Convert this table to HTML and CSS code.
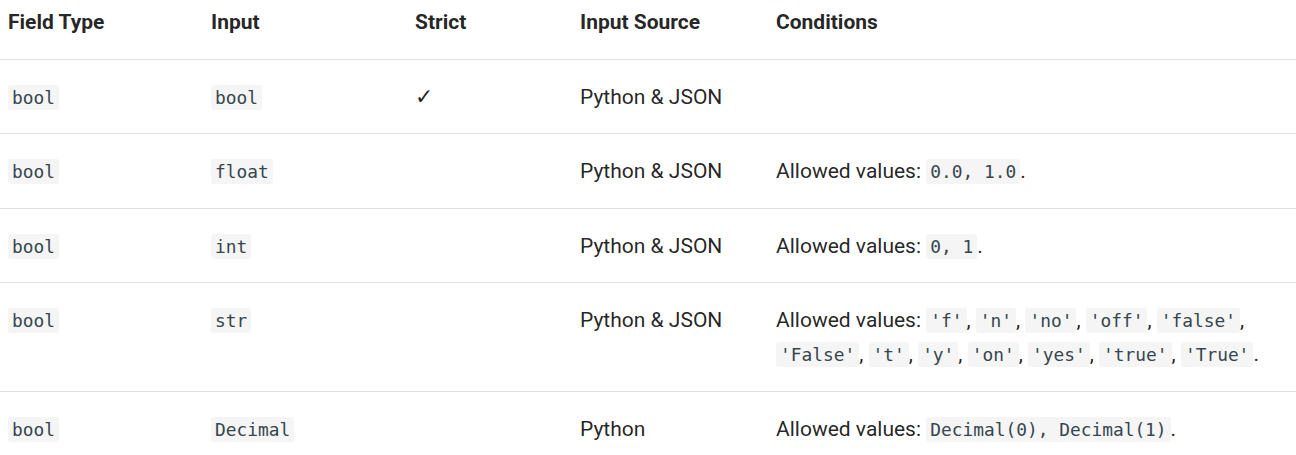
FILE: index.html
```html
<!DOCTYPE html>
<html>
<head>
<meta charset="utf-8">
<link rel="stylesheet" href="styles.css">
</head>
<body>
<table class="tbl">
  <colgroup>
    <col class="c1"><col class="c2"><col class="c3"><col class="c4"><col class="c5">
  </colgroup>
  <thead>
    <tr><th>Field Type</th><th>Input</th><th>Strict</th><th>Input Source</th><th>Conditions</th></tr>
  </thead>
  <tbody>
    <tr><td><code>bool</code></td><td><code>bool</code></td><td><span class="check">✓</span></td><td>Python &amp; JSON</td><td></td></tr>
    <tr><td><code>bool</code></td><td><code>float</code></td><td></td><td>Python &amp; JSON</td><td>Allowed values: <code>0.0, 1.0</code>.</td></tr>
    <tr><td><code>bool</code></td><td><code>int</code></td><td></td><td>Python &amp; JSON</td><td>Allowed values: <code>0, 1</code>.</td></tr>
    <tr><td><code>bool</code></td><td><code>str</code></td><td></td><td>Python &amp; JSON</td><td>Allowed values: <code>'f'</code>, <code>'n'</code>, <code>'no'</code>, <code>'off'</code>, <code>'false'</code>, <code>'False'</code>, <code>'t'</code>, <code>'y'</code>, <code>'on'</code>, <code>'yes'</code>, <code>'true'</code>, <code>'True'</code>.</td></tr>
    <tr><td><code>bool</code></td><td><code>Decimal</code></td><td></td><td>Python</td><td>Allowed values: <code>Decimal(0), Decimal(1)</code>.</td></tr>
  </tbody>
</table>
</body>
</html>
```
FILE: styles.css
```css
html, body {
  margin: 0;
  padding: 0;
  background: #ffffff;
}
body {
  font-family: Roboto, "Liberation Sans", sans-serif;
  font-size: 21px;
  color: rgba(0, 0, 0, 0.87);
}
.tbl {
  border-collapse: collapse;
  table-layout: fixed;
  width: 1296px;
  line-height: 1.6;
}
.c1 { width: 203px; }
.c2 { width: 204px; }
.c3 { width: 165px; }
.c4 { width: 196px; }
.tbl th {
  text-align: left;
  font-weight: 700;
  padding: 6px 20px 19px 8px;
  border-bottom: 1px solid #e0e0e0;
  vertical-align: top;
}
.tbl td {
  padding: 21px 26px 19px 8px;
  border-bottom: 1px solid #e0e0e0;
  vertical-align: top;
}
.tbl tbody tr:last-child td {
  border-bottom: none;
}
.check {
  font-family: "DejaVu Sans", sans-serif;
  font-size: 22px;
  line-height: 1;
  display: inline-block;
  vertical-align: baseline;
}
code {
  font-family: "DejaVu Sans Mono", "Liberation Mono", monospace;
  font-size: 0.85em;
  color: #36464e;
  background: #f5f5f5;
  padding: 2px 4px;
  border-radius: 3px;
  -webkit-box-decoration-break: clone;
  box-decoration-break: clone;
  word-break: normal;
}
```
